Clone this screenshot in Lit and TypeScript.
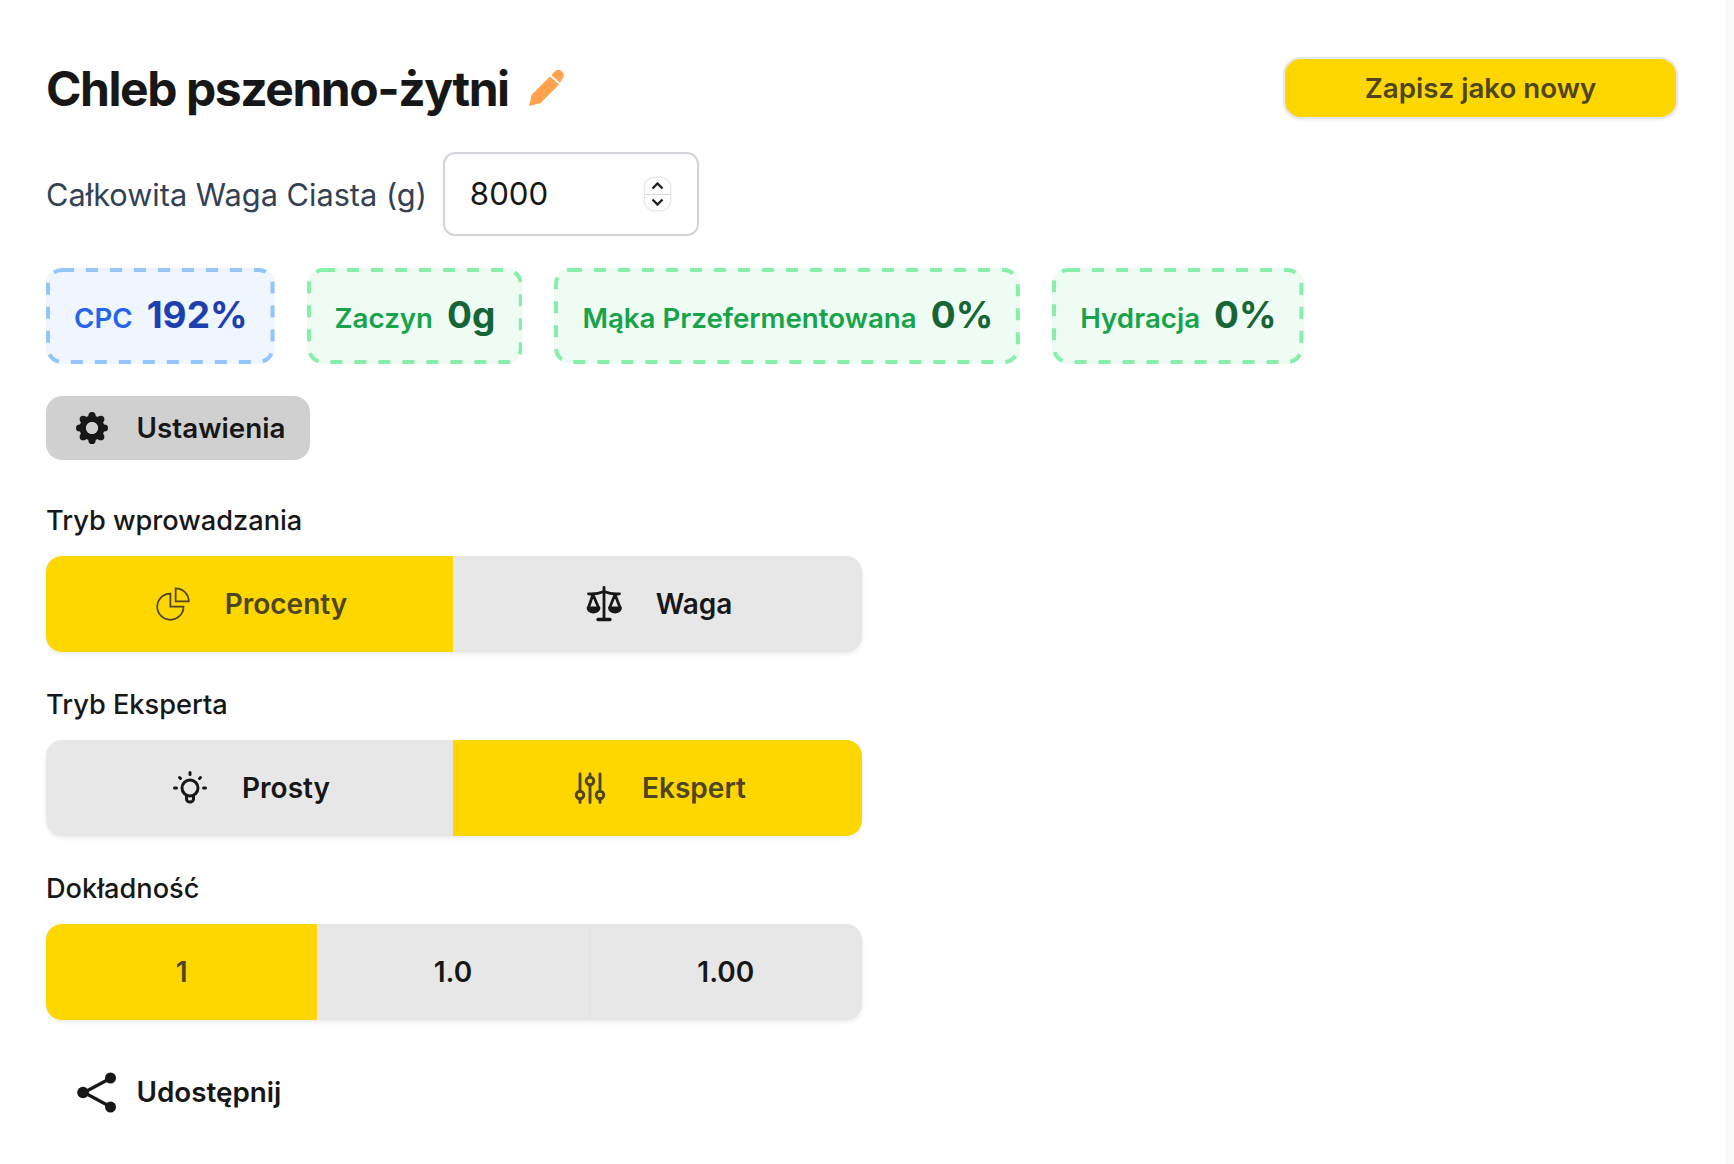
import { LitElement, html, css, svg } from "lit";
import { customElement } from "lit/decorators.js";

const teeth = [0, 45, 90, 135, 180, 225, 270, 315].map((a) => {
  const r = (a * Math.PI) / 180;
  return svg`<circle cx=${16 + 12.4 * Math.sin(r)} cy=${16 - 12.4 * Math.cos(r)} r="3.6"/>`;
});

const icons = {
  pencil: html`<svg width="38" height="38" viewBox="0 0 38 38" fill="#ffa24d" stroke="#ffa24d" stroke-width="1.5" stroke-linejoin="round"><path d="M3 36 L5.5 26 L23 8.5 L31 15.5 L13 33.5 Z"/><path d="M25.5 6 L28 3.2 C30 1.2 32.5 1.2 34.5 3 C36.5 5 36.3 7.8 34.5 9.6 L32.8 12.8 Z"/></svg>`,
  gear: html`<svg width="32" height="32" viewBox="0 0 32 32" fill="#171717"><path fill-rule="evenodd" d="M16 3.5a12.5 12.5 0 1 0 0 25a12.5 12.5 0 1 0 0-25zM16 10a6 6 0 1 1 0 12a6 6 0 1 1 0-12z"/><g>${teeth}</g><circle cx="16" cy="16" r="6" fill="#d0d0d0"/></svg>`,
  pie: html`<svg width="42" height="42" viewBox="0 0 24 24" fill="none" stroke="currentColor" stroke-width="1"><path d="M10.5 6a7.5 7.5 0 1 0 7.5 7.5h-7.5V6Z"/><path d="M13.5 10.5H21A7.5 7.5 0 0 0 13.5 3v7.5Z"/></svg>`,
  scale: html`<svg width="42" height="42" viewBox="0 0 42 42" fill="none" stroke="#171717" stroke-width="2.8" stroke-linecap="round" stroke-linejoin="round"><path d="M21 4.500V36"/><path d="M15 36.500h12" stroke-width="3.400"/><path d="M5.500 10.800C11 11.500 16 10.500 21 8.500C26 10.500 31 11.500 36.500 10.800"/><path d="M10 11.500L5.500 24.500M10 11.500L15.500 24.500M32 11.500L26.800 24.500M32 11.500L37 24.500"/><path d="M5 25h11c0 2.500-2.400 4-5.500 4s-5.500-1.500-5.500-4zM26.500 25h11c0 2.500-2.400 4-5.500 4s-5.500-1.500-5.500-4z" fill="#171717"/></svg>`,
  bulb: html`<svg width="42" height="42" viewBox="0 0 42 42" fill="none" stroke="currentColor" stroke-width="3" stroke-linecap="round" stroke-linejoin="round"><path d="M21 5.500v2M10.500 10.500l1 1M31.500 10.500l-1 1M5.500 21H7.500M34.500 21H36.500"/><circle cx="21" cy="21" r="8"/><path d="M17.500 28.500v3.500a3.500 3 0 0 0 7 0v-3.500"/></svg>`,
  sliders: html`<svg width="42" height="42" viewBox="0 0 42 42" fill="none" stroke="currentColor" stroke-width="2.900" stroke-linecap="round"><path d="M11 7V24M11 32V35.500M21 7V10M21 18V35.500M31 7V24M31 32V35.500"/><circle cx="11" cy="28" r="3.800"/><circle cx="21" cy="14" r="3.800"/><circle cx="31" cy="28" r="3.800"/></svg>`,
  share: html`<svg width="40" height="41" viewBox="0 0 40 41" fill="#171717" stroke="#171717"><path d="M33 6.500L7 20.500L33 34.500" fill="none" stroke-width="3.200"/><circle cx="33.500" cy="6" r="5.500" stroke="none"/><circle cx="6" cy="20.500" r="5.800" stroke="none"/><circle cx="33.500" cy="35" r="5.500" stroke="none"/></svg>`,
};

@customElement("app-root")
export class AppRoot extends LitElement {
  static styles = css`
    :host {
      display: flex;
      min-height: 1164px;
      background: #fff;
      font-family: Inter, "Liberation Sans", sans-serif;
      color: #171717;
    }
    * { box-sizing: border-box; }
    .main { flex: 1; min-width: 0; padding: 57px 48px 0 46px; }
    .scrollbar { width: 8px; background: #fafafa; border-left: 1px solid #f3f3f3; }
    .header { display: flex; justify-content: space-between; align-items: center; height: 62px; }
    .title { display: flex; align-items: center; gap: 18px; }
    h1 { margin: 0; padding-top: 1px; font-size: 48px; font-weight: 700; letter-spacing: -1.45px; line-height: 61px; }
    .save {
      width: 395px; height: 62px; border: 2px solid #e5e7eb; border-radius: 18px;
      background: #ffd700; color: #4f4522; font: 600 27.7px Inter, sans-serif;
      box-shadow: 0 1px 3px rgba(0,0,0,.08);
    }
    .weight { display: flex; align-items: center; gap: 16px; margin-top: 33px; }
    .weight label { font-size: 30.72px; color: #334155; }
    .input {
      display: flex; align-items: center; justify-content: space-between;
      width: 256px; height: 84px; padding: 0 27px 0 25px;
      border: 2px solid #d1d5db; border-radius: 12px; font-size: 31.2px; color: #171717;
    }
    .spin {
      display: flex; flex-direction: column; width: 25px; height: 32px;
      border-radius: 9px; box-shadow: 0 0 3px rgba(0,0,0,.28);
    }
    .spin span { flex: 1; display: flex; align-items: center; justify-content: center; }
    .spin span:first-child { border-bottom: 1px solid #d4d4d4; }
    .chips { display: flex; gap: 32px; margin-top: 32px; }
    .chip {
      position: relative;
      display: flex; align-items: baseline; gap: 14px; height: 96px;
      padding: 24px 27px 0 28px; border-radius: 16px;
    }
    .dash { position: absolute; inset: 0; width: 100%; height: 100%; }
    .dash rect {
      x: 2px; y: 2px; width: calc(100% - 4px); height: calc(100% - 4px); rx: 14px;
      fill: none; stroke-width: 4; stroke-dasharray: 12 12;
    }
    .chip .k { font-size: 27.7px; font-weight: 600; }
    .chip .v { font-size: 37px; font-weight: 700; }
    .blue { background: #eff6ff; }
    .blue rect { stroke: #93c5fd; }
    .blue .k { color: #2563eb; } .blue .v { color: #1e40af; }
    .green { background: #effcf4; }
    .green rect { stroke: #86efac; }
    .green .k { color: #16a34a; } .green .v { color: #166534; }
    .action {
      display: flex; align-items: center; height: 64px; font-size: 27.8px; font-weight: 600;
      color: #171717; border-radius: 16px;
    }
    .settings { width: 264px; margin-top: 32px; padding-left: 30px; gap: 28.500px; background: #d0d0d0; }
    .share { margin-top: 40px; padding-left: 31px; gap: 19.500px; }
    .group { margin-top: 32px; }
    .group.first { margin-top: 40px; }
    .group .lbl { height: 40px; line-height: 41px; font-size: 27.2px; font-weight: 500; margin-bottom: 16px; }
    .seg {
      display: grid; grid-auto-flow: column; grid-auto-columns: 1fr; width: 816px; height: 96px;
      padding-right: 2px;
      border-radius: 16px; overflow: hidden; background: #e7e7e7;
      box-shadow: 0 2px 4px rgba(0,0,0,.08);
    }
    .opt {
      display: flex; align-items: center; justify-content: center; gap: 31px;
      font-size: 28px; font-weight: 600; color: #171717;
    }
    .opt:last-child { margin-right: -2px; }
    .opt + .opt { border-left: 1px solid #e2e2e2; }
    .opt.on { background: #ffd700; color: #4f4522; border-left: 0; }
    .opt.on + .opt { border-left: 0; }
  `;

  private chip(kind: string, k: string, v: string) {
    return html`<div class="chip ${kind}">
      <svg class="dash"><rect></rect></svg>
      <span class="k">${k}</span><span class="v">${v}</span>
    </div>`;
  }

  private group(label: string, opts: { t: string; i?: unknown; on?: boolean }[], first = false) {
    return html`<div class="group ${first ? "first" : ""}">
      <div class="lbl">${label}</div>
      <div class="seg">
        ${opts.map((o) => html`<div class="opt ${o.on ? "on" : ""}">${o.i ?? ""}<span>${o.t}</span></div>`)}
      </div>
    </div>`;
  }

  render() {
    return html`
      <div class="main">
        <div class="header">
          <div class="title"><h1>Chleb pszenno-żytni</h1>${icons.pencil}</div>
          <button class="save">Zapisz jako nowy</button>
        </div>
        <div class="weight">
          <label>Całkowita Waga Ciasta (g)</label>
          <div class="input">
            <span>8000</span>
            <div class="spin">
              <span><svg width="13" height="8" viewBox="0 0 13 8" fill="none" stroke="#222" stroke-width="2.400"><path d="M1.500 6.500l5-5l5 5"/></svg></span>
              <span><svg width="13" height="8" viewBox="0 0 13 8" fill="none" stroke="#222" stroke-width="2.400"><path d="M1.500 1.500l5 5l5-5"/></svg></span>
            </div>
          </div>
        </div>
        <div class="chips">
          ${this.chip("blue", "CPC", "192%")}
          ${this.chip("green", "Zaczyn", "0g")}
          ${this.chip("green", "Mąka Przefermentowana", "0%")}
          ${this.chip("green", "Hydracja", "0%")}
        </div>
        <div class="action settings">${icons.gear}<span>Ustawienia</span></div>
        ${this.group("Tryb wprowadzania", [{ t: "Procenty", i: icons.pie, on: true }, { t: "Waga", i: icons.scale }], true)}
        ${this.group("Tryb Eksperta", [{ t: "Prosty", i: icons.bulb }, { t: "Ekspert", i: icons.sliders, on: true }])}
        ${this.group("Dokładność", [{ t: "1", on: true }, { t: "1.0" }, { t: "1.00" }])}
        <div class="action share">${icons.share}<span>Udostępnij</span></div>
      </div>
      <div class="scrollbar"></div>
    `;
  }
}
